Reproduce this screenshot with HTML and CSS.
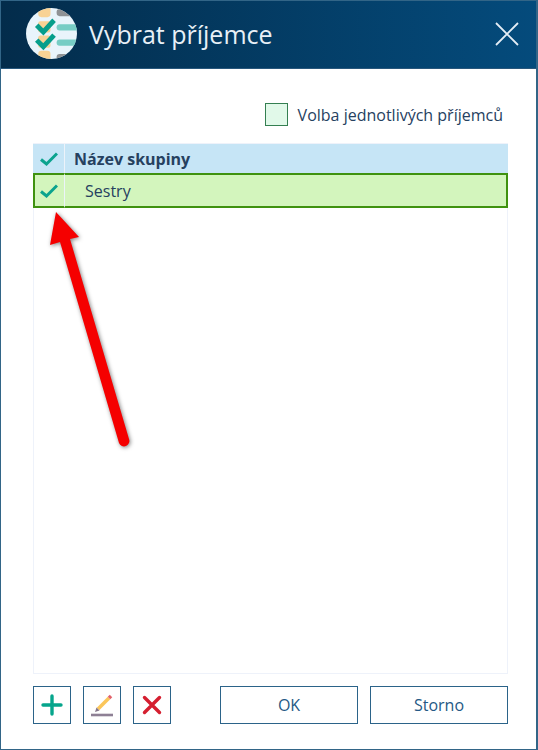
FILE: index.html
```html
<!DOCTYPE html>
<html lang="cs">
    <head>
        <meta charset="utf-8">
        <title>Vybrat příjemce</title>
        <link rel="stylesheet" href="styles.css">
    </head>
    <body>
        <main class="dialog">
            <header class="dialog-header">
                <svg class="logo" viewBox="0 0 50 50" aria-hidden="true">
                    <clipPath id="logo-clip"><circle cx="25" cy="25" r="25" /></clipPath>
                    <g clip-path="url(#logo-clip)">
                        <rect width="50" height="50" fill="#e9f4fb" />
                        <g fill="#f8d294">
                            <rect x="12" y="-4" width="12" height="13" rx="3" />
                            <rect x="12" y="13" width="12" height="11" rx="2" />
                            <rect x="12" y="27" width="12" height="12" rx="2" />
                            <rect x="12" y="42" width="12" height="12" rx="3" />
                        </g>
                        <g fill="#8f9295">
                            <rect x="30" y="1" width="24" height="7" rx="3" />
                            <rect x="30" y="45" width="24" height="7" rx="3" />
                        </g>
                        <g fill="#77cdc5">
                            <rect x="30" y="16" width="24" height="6" rx="3" />
                            <rect x="30" y="31" width="24" height="6" rx="3" />
                        </g>
                        <path d="M10.500 17 L17 23.500 L27.500 12 M10.500 31.500 L17 38 L27.500 26.500" fill="none" stroke="#069e8b" stroke-width="4.800" />
                    </g>
                </svg>
                <h1>Vybrat příjemce</h1>
                <button class="close" type="button" aria-label="Zavřít">
                    <svg viewBox="0 0 24 24"><path d="M1 1 L23 23 M23 1 L1 23" fill="none" stroke="#e4edf5" stroke-width="1.800" /></svg>
                </button>
            </header>

            <div class="dialog-body">
                <label class="option"><input type="checkbox" id="individual" />Volba jednotlivých příjemců</label>

                <div class="list">
                    <table>
                        <thead>
                            <tr>
                                <th class="check"><svg viewBox="0 0 18 14"><path d="M1 7.500 L6.500 12 L17 1.500" /></svg></th>
                                <th>Název skupiny</th>
                            </tr>
                        </thead>
                        <tbody>
                            <tr class="selected">
                                <td class="check"><svg viewBox="0 0 18 14"><path d="M1 7.500 L6.500 12 L17 1.500" /></svg></td>
                                <td>Sestry</td>
                            </tr>
                        </tbody>
                    </table>
                    <svg class="arrow" viewBox="0 0 90 240" aria-hidden="true">
                        <path d="M16 4 L39 29 L30 31 L89 231 A5.300 5.300 0 0 1 79 235 L20 34 L10 37 Z" fill="#f50000" />
                    </svg>
                </div>

                <footer class="actions">
                    <button class="button button--icon" type="button" aria-label="Přidat">
                        <svg viewBox="0 0 24 24"><path d="M12 3 V21 M3 12 H21" fill="none" stroke="#06a58c" stroke-width="3.400" stroke-linecap="round" /></svg>
                    </button>
                    <button class="button button--icon" type="button" aria-label="Upravit">
                        <svg viewBox="0 0 24 24">
                            <path d="M1 22 H23" stroke="#8e8095" stroke-width="2.600" />
                            <path d="M8 16 L19 5" stroke="#fbc65b" stroke-width="3.600" />
                            <path d="M19 5 L21 3" stroke="#e2626b" stroke-width="3.600" />
                            <path d="M5 19 L6.500 14.500 L9.500 17.500 Z" fill="#85778c" />
                        </svg>
                    </button>
                    <button class="button button--icon" type="button" aria-label="Smazat">
                        <svg viewBox="0 0 24 24"><path d="M4.500 4.500 L19.500 19.500 M19.500 4.500 L4.500 19.500" fill="none" stroke="#d51f30" stroke-width="3.400" stroke-linecap="round" /></svg>
                    </button>
                    <div class="confirm">
                        <button class="button" type="button">OK</button>
                        <button class="button" type="button">Storno</button>
                    </div>
                </footer>
            </div>
        </main>
    </body>
</html>
```

FILE: styles.css
```css
* {
    box-sizing: border-box;
}

body {
    margin: 0;
    color: #26415f;
    font-family: "Open Sans", sans-serif;
    font-size: 16px;
    line-height: 22px;
}

svg {
    display: block;
}

button {
    font: inherit;
    cursor: pointer;
}

.dialog {
    display: flex;
    flex-direction: column;
    min-height: 100vh;
    border: 1px solid #326587;
    border-right-width: 2px;
    background-color: #fff;
}

.dialog-header {
    display: flex;
    align-items: center;
    height: 68px;
    padding: 0 17px 2px 25px;
    border-bottom: 1px solid #28577c;
    background: linear-gradient(90deg, #032c4b, #044b7c);
}

.logo {
    width: 51px;
    height: 51px;
}

h1 {
    flex: 1;
    margin: 0 0 0 12px;
    color: #e8f0f7;
    font-size: 25px;
    font-weight: 400;
    line-height: 34px;
}

.close {
    padding: 0;
    border: 0;
    background: none;
}

.close svg {
    width: 24px;
    height: 24px;
}

.dialog-body {
    flex: 1;
    display: flex;
    flex-direction: column;
    padding: 34px 28px 25px 32px;
}

.option {
    display: flex;
    align-items: center;
    align-self: flex-end;
    gap: 10px;
    margin-right: 5px;
}

.option input {
    appearance: none;
    width: 23px;
    height: 23px;
    margin: 0;
    border: 1px solid #347f51;
    background-color: #e1f9e9;
}

.option input:checked {
    background-color: #069e8b;
}

.list {
    position: relative;
    flex: 1;
    margin-top: 17px;
    border: 1px solid #eef2fa;
    border-width: 1px 0;
    box-shadow: inset 1px 0 #eef2fa, inset -1px 0 #eef2fa;
}

table {
    width: 100%;
    border-collapse: separate;
    border-spacing: 0;
}

th,
td {
    padding: 0 9px;
    text-align: left;
}

th {
    height: 29px;
    background-color: #c6e5f6;
    font-weight: 700;
}

td {
    height: 35px;
    padding-left: 20px;
    border: solid #3f920f;
    border-width: 2px 0;
    background-color: #d3f5bd;
}

td:last-child {
    border-right-width: 2px;
}

.check {
    width: 32px;
    padding: 0 0 0 7px;
    border-right: 1px solid #edf3fa;
}

td.check {
    border-left-width: 2px;
    padding-left: 5px;
}

.check svg {
    width: 18px;
    height: 14px;
    fill: none;
    stroke: #0ba38e;
    stroke-width: 3;
}

.arrow {
    position: absolute;
    top: 64px;
    left: 7px;
    width: 90px;
    height: 240px;
    overflow: visible;
    filter: drop-shadow(1px 1px 2px rgba(0, 0, 0, 0.5));
    pointer-events: none;
}

.actions {
    display: flex;
    gap: 12px;
    margin-top: 12px;
}

.button {
    display: flex;
    align-items: center;
    justify-content: center;
    height: 38px;
    padding: 0 12px;
    border: 1px solid #2b6389;
    background-color: #fff;
    color: #255985;
}

.button:hover {
    background-color: #e9f4fb;
}

.button--icon {
    width: 38px;
    padding: 0;
}

.button--icon svg {
    width: 24px;
    height: 24px;
    fill: none;
}

.confirm {
    flex: 1;
    display: flex;
    gap: 12px;
    margin-left: 37px;
}

.confirm .button {
    flex: 1;
}
```
